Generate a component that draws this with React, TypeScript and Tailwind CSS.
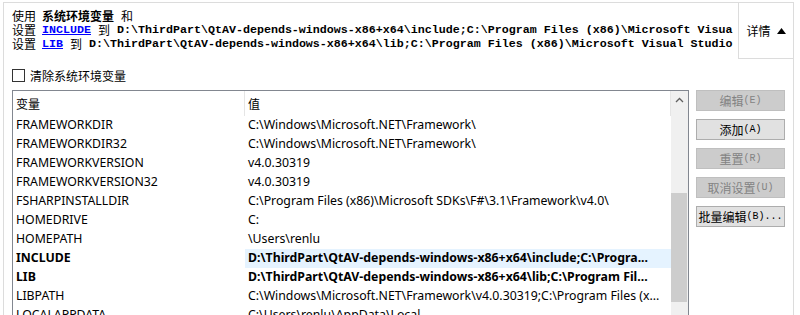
import React from "react";

const rows: { name: string; value: string; bold?: boolean; hl?: boolean }[] = [
  { name: "FRAMEWORKDIR", value: "C:\\Windows\\Microsoft.NET\\Framework\\" },
  { name: "FRAMEWORKDIR32", value: "C:\\Windows\\Microsoft.NET\\Framework\\" },
  { name: "FRAMEWORKVERSION", value: "v4.0.30319" },
  { name: "FRAMEWORKVERSION32", value: "v4.0.30319" },
  { name: "FSHARPINSTALLDIR", value: "C:\\Program Files (x86)\\Microsoft SDKs\\F#\\3.1\\Framework\\v4.0\\" },
  { name: "HOMEDRIVE", value: "C:" },
  { name: "HOMEPATH", value: "\\Users\\renlu" },
  { name: "INCLUDE", value: "D:\\ThirdPart\\QtAV-depends-windows-x86+x64\\include;C:\\Progra...", bold: true, hl: true },
  { name: "LIB", value: "D:\\ThirdPart\\QtAV-depends-windows-x86+x64\\lib;C:\\Program Fil...", bold: true },
  { name: "LIBPATH", value: "C:\\Windows\\Microsoft.NET\\Framework\\v4.0.30319;C:\\Program Files (x..." },
  { name: "LOCALAPPDATA", value: "C:\\Users\\renlu\\AppData\\Local" },
];

const cjk = "font-['Noto_Sans_CJK_SC',sans-serif]";
const mono = "font-['Liberation_Mono','Noto_Sans_CJK_SC',monospace]";

function Btn({ cn, ascii, disabled }: { cn: string; ascii: string; disabled?: boolean }) {
  return (
    <div
      className={
        "h-[21px] w-[89px] flex items-center justify-center whitespace-nowrap leading-none border " +
        (disabled
          ? "bg-[#cccccc] border-[#bfbfbf] text-[#838383]"
          : "bg-[#e1e1e1] border-[#adadad] text-black")
      }
    >
      <span className={"text-[12px] " + cjk}>{cn}</span>
      <span className="text-[10px] font-['Liberation_Mono',monospace]">{ascii}</span>
    </div>
  );
}

export default function App() {
  return (
    <div className="w-[800px] h-[315px] bg-white overflow-hidden">
      <div className="ml-[3px] mt-[2px] w-[791px] h-[400px] border border-[#dcdcdc]">
        {/* top area */}
        <div className="flex h-[56px]">
          <div className={"flex-1 min-w-0 overflow-hidden pl-[8px] pt-[6px] text-[12px] leading-[14px] text-black whitespace-nowrap " + cjk}>
            <div className="h-[14px] flex items-center">
              <span>使用</span>
              <span className="font-bold ml-[6px]">系统环境变量</span>
              <span className="ml-[7px]">和</span>
            </div>
            <div className="h-[14px] flex items-center">
              <span>设置</span>
              <span className={"ml-[6px] font-bold text-[#0000ff] underline text-[11.67px] " + mono}>INCLUDE</span>
              <span className="ml-[7px]">到</span>
              <span className={"ml-[7px] font-bold text-[11.67px] " + mono}>
                D:\ThirdPart\QtAV-depends-windows-x86+x64\include;C:\Program Files (x86)\Microsoft Visua
              </span>
            </div>
            <div className="h-[14px] flex items-center">
              <span>设置</span>
              <span className={"ml-[6px] font-bold text-[#0000ff] underline text-[11.67px] " + mono}>LIB</span>
              <span className="ml-[7px]">到</span>
              <span className={"ml-[7px] font-bold text-[11.67px] " + mono}>
                D:\ThirdPart\QtAV-depends-windows-x86+x64\lib;C:\Program Files (x86)\Microsoft Visual Studio
              </span>
            </div>
          </div>
          <div className={"w-[55px] h-[56px] shrink-0 border-l border-b border-[#dcdcdc] flex items-center justify-center gap-[6px] text-[12px] text-black " + cjk}>
            <span>详情</span>
            <svg width="9" height="6" viewBox="0 0 9 6">
              <polygon points="4.5,0 9,6 0,6" fill="#000" />
            </svg>
          </div>
        </div>

        {/* checkbox */}
        <div className={"flex items-center gap-[5px] pl-[8px] mt-[10px] h-[13px] text-[12px] text-black " + cjk}>
          <div className="w-[13px] h-[13px] border border-[#333333] bg-white" />
          <span>清除系统环境变量</span>
        </div>

        {/* main */}
        <div className="flex mt-[8px] ml-[8px] gap-[7px]">
          <div className="w-[677px] h-[240px] border border-[#828790] flex">
            <div className="flex-1 flex flex-col min-w-0">
              <div className={"flex h-[25px] text-[12px] text-black " + cjk}>
                <div className="w-[232px] border-r border-[#e5e5e5] pl-[3px] flex items-center">变量</div>
                <div className="flex-1 pl-[3px] flex items-center border-r border-[#e5e5e5]">值</div>
              </div>
              {rows.map((r) => (
                <div
                  key={r.name}
                  className={
                    "flex h-[19px] text-[12.3px] text-black font-['Noto_Sans',sans-serif] " +
                    (r.bold ? "font-bold" : "")
                  }
                >
                  <div className="w-[232px] pl-[3px] flex items-center whitespace-nowrap overflow-hidden">{r.name}</div>
                  <div
                    className={
                      "flex-1 pl-[3px] flex items-center whitespace-nowrap overflow-hidden " +
                      (r.hl ? "bg-[#e5f3ff]" : "")
                    }
                  >
                    {r.value}
                  </div>
                </div>
              ))}
            </div>
            {/* scrollbar */}
            <div className="w-[17px] bg-[#f0f0f0] flex flex-col">
              <div className="h-[17px] flex items-center justify-center">
                <svg width="9" height="6" viewBox="0 0 9 6">
                  <polyline points="1,5 4.5,1.5 8,5" fill="none" stroke="#606060" strokeWidth="1.3" />
                </svg>
              </div>
              <div className="mt-[85px] h-[109px] mr-[1px] bg-[#cdcdcd]" />
            </div>
          </div>
          <div className="flex flex-col gap-[8px]">
            <Btn cn="编辑" ascii="(E)" disabled />
            <Btn cn="添加" ascii="(A)" />
            <Btn cn="重置" ascii="(R)" disabled />
            <Btn cn="取消设置" ascii="(U)" disabled />
            <Btn cn="批量编辑" ascii="(B)..." />
          </div>
        </div>
      </div>
    </div>
  );
}
